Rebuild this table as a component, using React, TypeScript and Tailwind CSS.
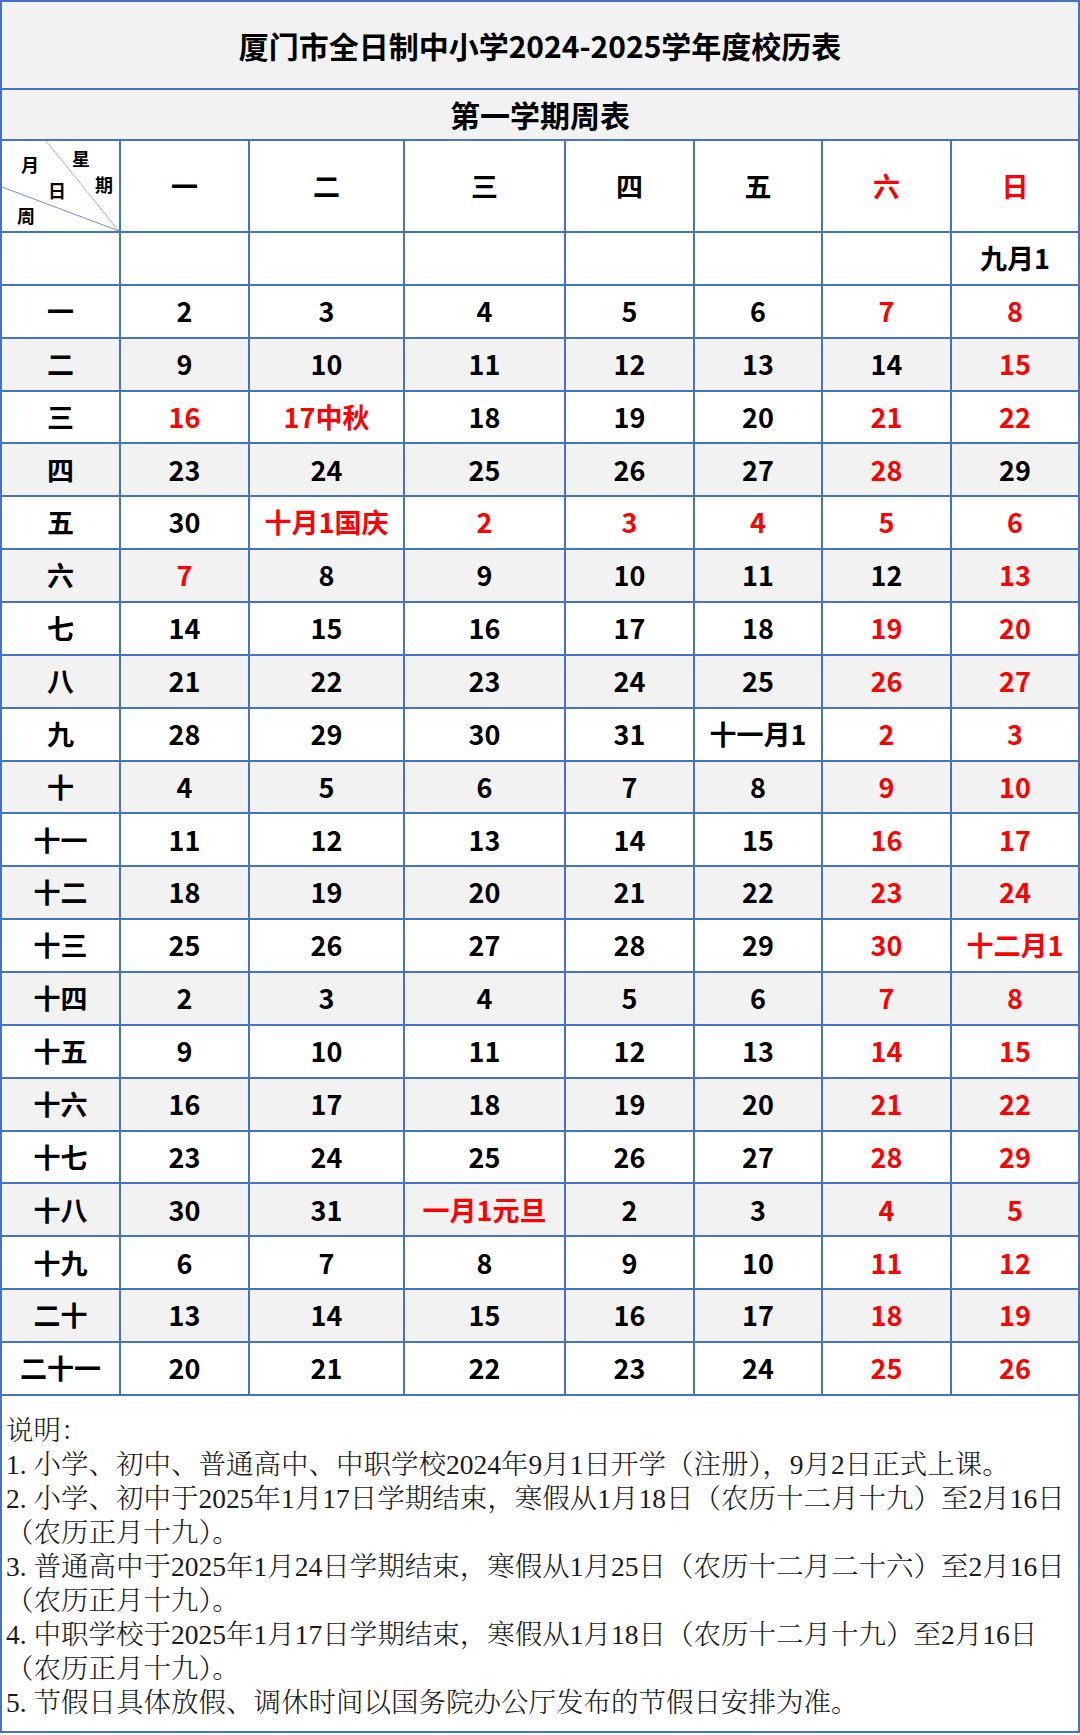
import React from "react";

const rows: string[][] = [
  ["", "", "", "", "", "", "", "九月1"],
  ["一", "2", "3", "4", "5", "6", "*7", "*8"],
  ["二", "9", "10", "11", "12", "13", "14", "*15"],
  ["三", "*16", "*17中秋", "18", "19", "20", "*21", "*22"],
  ["四", "23", "24", "25", "26", "27", "*28", "29"],
  ["五", "30", "*十月1国庆", "*2", "*3", "*4", "*5", "*6"],
  ["六", "*7", "8", "9", "10", "11", "12", "*13"],
  ["七", "14", "15", "16", "17", "18", "*19", "*20"],
  ["八", "21", "22", "23", "24", "25", "*26", "*27"],
  ["九", "28", "29", "30", "31", "十一月1", "*2", "*3"],
  ["十", "4", "5", "6", "7", "8", "*9", "*10"],
  ["十一", "11", "12", "13", "14", "15", "*16", "*17"],
  ["十二", "18", "19", "20", "21", "22", "*23", "*24"],
  ["十三", "25", "26", "27", "28", "29", "*30", "*十二月1"],
  ["十四", "2", "3", "4", "5", "6", "*7", "*8"],
  ["十五", "9", "10", "11", "12", "13", "*14", "*15"],
  ["十六", "16", "17", "18", "19", "20", "*21", "*22"],
  ["十七", "23", "24", "25", "26", "27", "*28", "*29"],
  ["十八", "30", "31", "*一月1元旦", "2", "3", "*4", "*5"],
  ["十九", "6", "7", "8", "9", "10", "*11", "*12"],
  ["二十", "13", "14", "15", "16", "17", "*18", "*19"],
  ["二十一", "20", "21", "22", "23", "24", "*25", "*26"],
];

const headers = ["一", "二", "三", "四", "五", "六", "日"];

const notes = [
  "说明：",
  "1. 小学、初中、普通高中、中职学校2024年9月1日开学（注册），9月2日正式上课。",
  "2. 小学、初中于2025年1月17日学期结束，寒假从1月18日（农历十二月十九）至2月16日",
  "（农历正月十九）。",
  "3. 普通高中于2025年1月24日学期结束，寒假从1月25日（农历十二月二十六）至2月16日",
  "（农历正月十九）。",
  "4. 中职学校于2025年1月17日学期结束，寒假从1月18日（农历十二月十九）至2月16日",
  "（农历正月十九）。",
  "5. 节假日具体放假、调休时间以国务院办公厅发布的节假日安排为准。",
];

function Corner() {
  return (
    <div className="relative h-full border-r-2 border-[#4472c4]">
      <svg className="absolute inset-0" width="117" height="90" viewBox="0 0 117 90">
        <line x1="44" y1="0" x2="117" y2="90" stroke="#9db4e3" strokeWidth="1" />
        <line x1="0" y1="46" x2="117" y2="90" stroke="#6f8fd6" strokeWidth="1" />
      </svg>
      <span className="absolute left-[19px] top-[14px] text-[18px] leading-none">月</span>
      <span className="absolute left-[70px] top-[8px] text-[18px] leading-none">星</span>
      <span className="absolute left-[46px] top-[40px] text-[18px] leading-none">日</span>
      <span className="absolute left-[93px] top-[34px] text-[18px] leading-none">期</span>
      <span className="absolute left-[15px] top-[65px] text-[18px] leading-none">周</span>
    </div>
  );
}

export default function App() {
  return (
    <div className="w-[1080px] h-[1735px] bg-white font-['Noto_Sans_CJK_SC',sans-serif] text-black">
      <div className="w-[1080px] h-[1733px] border-2 border-[#4472c4] flex flex-col">
        <div className="h-[88px] shrink-0 border-b-2 border-[#4472c4] bg-[#f2f2f2] flex items-center justify-center text-[30px] font-bold">
          厦门市全日制中小学2024-2025学年度校历表
        </div>
        <div className="h-[51px] shrink-0 border-b-2 border-[#4472c4] bg-[#f2f2f2] flex items-center justify-center text-[30px] font-bold">
          第一学期周表
        </div>
        <div className="grid grid-cols-[119px_129px_155px_161px_129px_128px_129px_126px] font-bold text-[27px]">
          <div className="h-[92px] border-b-2 border-[#4472c4]">
            <Corner />
          </div>
          {headers.map((h, j) => (
            <div
              key={h}
              className={`h-[92px] border-b-2 border-[#4472c4] flex items-center justify-center ${
                j < 6 ? "border-r-2" : ""
              } ${j >= 5 ? "text-[#ff0000]" : ""}`}
            >
              {h}
            </div>
          ))}
          {rows.map((r, i) =>
            r.map((c, j) => {
              const red = c.startsWith("*");
              const txt = red ? c.slice(1) : c;
              const gray = i >= 1 && i % 2 === 0;
              return (
                <div
                  key={`${i}-${j}`}
                  className={`h-[52.86px] border-b-2 border-[#4472c4] flex items-center justify-center whitespace-nowrap ${
                    j < 7 ? "border-r-2" : ""
                  } ${gray ? "bg-[#f2f2f2]" : "bg-white"} ${red ? "text-[#ff0000]" : ""}`}
                >
                  {txt}
                </div>
              );
            })
          )}
        </div>
        <div className="flex-1 pt-[18px] pl-[4px] font-['Liberation_Serif','Noto_Serif_CJK_SC','Noto_Sans_CJK_SC',serif] font-light text-[27.5px] leading-[34px] text-[#1a1a1a]">
          {notes.map((n, i) => (
            <div key={i} className="whitespace-nowrap">
              {n}
            </div>
          ))}
        </div>
      </div>
    </div>
  );
}
